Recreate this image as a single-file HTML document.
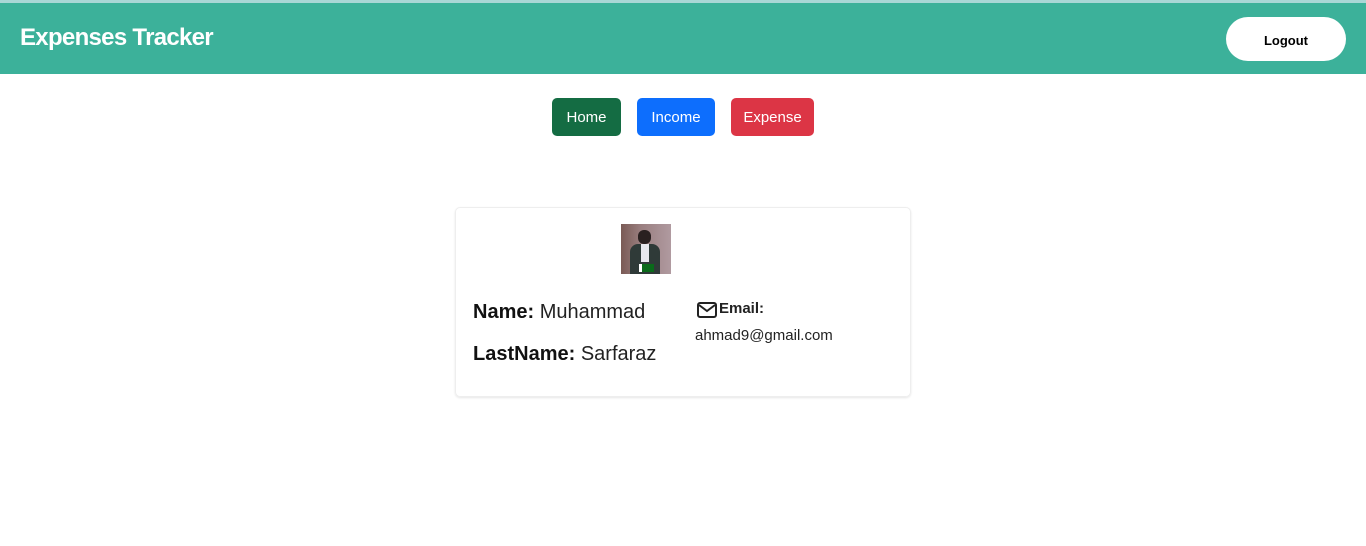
<!DOCTYPE html>
<html><head><style>
body{margin:0;width:1366px;height:546px;background:#fff;font-family:"Liberation Sans",sans-serif;position:relative;overflow:hidden}
.top{position:absolute;left:0;top:0;width:1366px;height:3px;background:#a9d7d6}
.hdr{position:absolute;left:0;top:3px;width:1366px;height:71px;background:#3cb19a}
.title{position:absolute;left:20px;top:21px;color:#fff;font-size:24px;font-weight:bold;letter-spacing:-0.7px}
.logout{position:absolute;left:1226px;top:14px;width:120px;height:44px;border-radius:22px;background:#fff;color:#000;font-size:13px;font-weight:bold;text-align:center;line-height:47px}
.btn{position:absolute;top:98px;height:38px;border-radius:5px;color:#fff;font-size:15px;text-align:center;line-height:40px}
.card{position:absolute;left:455px;top:207px;width:454px;height:188px;border:1px solid #eee;border-radius:5px;box-shadow:0 1px 2px rgba(0,0,0,.1)}
.photo{position:absolute;left:621px;top:224px;width:50px;height:50px;background:linear-gradient(90deg,#7a5a55,#9a7f80 40%,#b09aa0);overflow:hidden}
.t{position:absolute;color:#222;font-size:20px;white-space:nowrap}
.t b{font-weight:bold;color:#111}
</style></head><body>
<div class="top"></div>
<div class="hdr"><div class="title">Expenses Tracker</div><div class="logout">Logout</div></div>
<div class="btn" style="left:552px;width:69px;background:#146c43">Home</div>
<div class="btn" style="left:637px;width:78px;background:#0d6efd">Income</div>
<div class="btn" style="left:731px;width:83px;background:#dc3545">Expense</div>
<div class="card"></div>
<div class="photo">
<div style="position:absolute;left:17px;top:6px;width:13px;height:14px;border-radius:6px;background:#2a2020"></div>
<div style="position:absolute;left:9px;top:20px;width:30px;height:30px;background:#2f3a38;border-radius:8px 8px 0 0"></div>
<div style="position:absolute;left:20px;top:20px;width:8px;height:18px;background:#e8e8ee"></div>
<div style="position:absolute;left:18px;top:40px;width:12px;height:8px;background:#0a6a1a;border-left:3px solid #fff"></div>
</div>
<div class="t" style="left:473px;top:301px"><b>Name:</b> Muhammad</div>
<div class="t" style="left:473px;top:343px"><b>LastName:</b> Sarfaraz</div>
<svg style="position:absolute;left:697px;top:302px" width="20" height="16" viewBox="0 0 20 16"><rect x="1" y="1" width="18" height="14" rx="2" fill="none" stroke="#222" stroke-width="2"/><path d="M2 3l8 6 8-6" fill="none" stroke="#222" stroke-width="2"/></svg>
<div class="t" style="left:719px;top:300px;font-size:15px;font-weight:bold">Email:</div>
<div class="t" style="left:695px;top:327px;font-size:15px">ahmad9@gmail.com</div>
</body></html>
